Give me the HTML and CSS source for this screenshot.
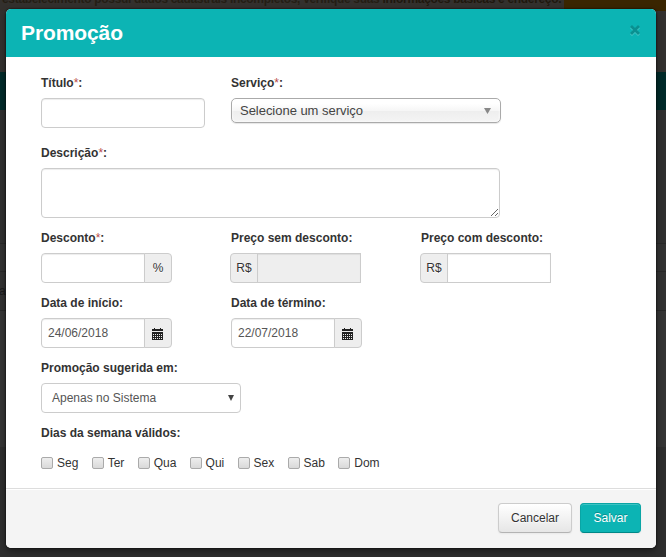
FILE: index.html
```html
<!DOCTYPE html>
<html lang="pt-BR">
<head>
<meta charset="utf-8">
<title>Promoção</title>
<link rel="stylesheet" href="styles.css">
</head>
<body>
<div class="page">
  <div class="notice"><p>estabelecimento possui dados cadastrais incompletos, verifique suas <b>informações básicas e endereço.</b></p><span class="notice-action"></span></div>
  <div class="page-top"></div>
  <div class="navband"></div>
  <div class="page-main"></div>
  <div class="page-row"></div>
  <div class="page-row tall">ar</div>
  <div class="page-rest"></div>
  <div class="page-end"></div>
</div>
<section class="modal">
  <header><h1>Promoção</h1><button class="close" aria-label="Fechar"><svg width="10" height="11" viewBox="0 0 10 11"><path class="close-light" d="M1 2l8 8M9 2l-8 8"/><path class="close-mark" d="M1 1l8 8M9 1l-8 8"/></svg></button></header>
  <form>
    <div class="row first">
      <div class="field"><label>Título<i>*</i>:</label><input class="title-input" type="text"></div>
      <div class="field"><label>Serviço<i>*</i>:</label><div class="service"><span>Selecione um serviço</span><svg width="7" height="6" viewBox="0 0 7 6"><path d="M0 0h7L3.5 6z"/></svg></div></div>
    </div>
    <div class="row"><div class="field"><label>Descrição<i>*</i>:</label><textarea></textarea></div></div>
    <div class="row">
      <div class="field"><label>Desconto<i>*</i>:</label><div class="group"><input type="text"><span class="addon">%</span></div></div>
      <div class="field price"><label>Preço sem desconto:</label><div class="group pre"><span class="addon">R$</span><input type="text" disabled></div></div>
      <div class="field"><label>Preço com desconto:</label><div class="group pre"><span class="addon">R$</span><input type="text"></div></div>
    </div>
    <div class="row">
      <div class="field"><label>Data de início:</label><div class="group"><input type="text" value="24/06/2018"><span class="addon"><svg class="cal" width="11" height="12" viewBox="0 0 11 12"><path d="M2 0h1v1h5V0h1v1h2v2H0V1h2zM0 4h11v8H0z"/><path class="days" d="M1.5 6v5M3.5 6v5M5.5 6v5M7.5 6v5M9.5 6v5"/></svg></span></div></div>
      <div class="field"><label>Data de término:</label><div class="group"><input type="text" value="22/07/2018"><span class="addon"><svg class="cal" width="11" height="12" viewBox="0 0 11 12"><path d="M2 0h1v1h5V0h1v1h2v2H0V1h2zM0 4h11v8H0z"/><path class="days" d="M1.5 6v5M3.5 6v5M5.5 6v5M7.5 6v5M9.5 6v5"/></svg></span></div></div>
    </div>
    <div class="row"><div class="field"><label>Promoção sugerida em:</label><div class="select"><span>Apenas no Sistema</span><svg width="6" height="6" viewBox="0 0 6 6"><path d="M0 0h6L3 6z"/></svg></div></div></div>
    <div class="row"><div class="field"><label>Dias da semana válidos:</label>
      <div class="days-list"><span class="day"><span class="box"></span>Seg</span><span class="day"><span class="box"></span>Ter</span><span class="day"><span class="box"></span>Qua</span><span class="day"><span class="box"></span>Qui</span><span class="day"><span class="box"></span>Sex</span><span class="day"><span class="box"></span>Sab</span><span class="day"><span class="box"></span>Dom</span></div>
    </div></div>
  </form>
  <footer><button class="btn">Cancelar</button><button class="btn primary">Salvar</button></footer>
</section>
</body>
</html>
```
FILE: styles.css
```css
* { box-sizing: border-box; }
body { margin: 0; width: 666px; height: 557px; overflow: hidden; background: #303030; color: #333; font: 12px/20px "Liberation Sans", Arial, sans-serif; }
.page { height: 557px; display: flex; flex-direction: column; color: #1b1b1b; }
.notice { height: 11px; display: flex; justify-content: space-between; background: #33302d; overflow: hidden; color: #231d14; font-weight: bold; letter-spacing: -0.32px; }
.notice p { margin: -11px 0 0 2px; white-space: nowrap; }
.notice b { color: #1e170d; }
.notice-action { flex: none; width: 102px; height: 11px; background: #3a2500; }
.page-top { height: 61px; background: #33312f; }
.navband { height: 38px; background: #002a29; }
.page-main { height: 133px; background: #303030; }
.page-row { height: 28px; background: #323232; border-top: 1px solid #282828; }
.page-row.tall { height: 40px; line-height: 38px; border-bottom: 1px solid #282828; margin-left: -1px; }
.page-rest { height: 136px; background: #353535; }
.page-end { flex: 1; background: #2e2e2e; }
.modal { position: absolute; left: 6px; top: 9px; width: 650px; height: 539px; display: flex; flex-direction: column; border-radius: 5px; overflow: hidden; background: #fff; box-shadow: 0 0 2px #000, 0 3px 7px rgba(0,0,0,.4); }
header { height: 48px; padding: 0 16px 0 15px; display: flex; align-items: center; justify-content: space-between; background: #0cb4b4; }
h1 { margin: 0; font-size: 21px; line-height: 30px; letter-spacing: -0.1px; color: #fff; }
.close { border: 0; background: none; padding: 0; width: 10px; height: 11px; margin-bottom: 5px; line-height: 0; }
.close path { fill: none; stroke-width: 2.8; }
.close .close-mark { stroke: #0a9090; }
.close .close-light { stroke: #4cc8c8; }
form { height: 431px; padding: 16px 35px 0; }
.row { display: flex; margin-bottom: 10px; }
.row.first { margin-bottom: 15px; }
.field { width: 190px; }
.field.price { margin-left: -1px; width: 190px; }
.price label, .price + .field label { padding-left: 1px; }
label { display: block; font-weight: bold; margin-bottom: 5px; }
label i { font-style: normal; font-weight: normal; color: #b94a48; }
input, textarea { display: block; height: 30px; border: 1px solid #ccc; border-radius: 4px; background: #fff; box-shadow: inset 0 1px 1px rgba(0,0,0,.075); font: 12px/20px "Liberation Sans", Arial, sans-serif; color: #555; padding: 4px 6px; margin: 0; outline: 0; }
.title-input { width: 164px; }
textarea { width: 459px; height: 50px; resize: both; }
.service { width: 270px; height: 25px; display: flex; align-items: center; justify-content: space-between; padding: 0 9px 0 8px; border: 1px solid #aaa; border-radius: 5px; background: linear-gradient(#fff 20%, #f6f6f6 50%, #eee 52%, #f4f4f4 100%); box-shadow: inset 0 0 3px #fff, 0 1px 1px rgba(0,0,0,.1); font-size: 13px; letter-spacing: -0.03px; color: #444; }
.service svg { fill: #888; }
.group { display: flex; }
.group input { width: 104px; border-radius: 4px 0 0 4px; }
.addon { width: 28px; height: 30px; margin-left: -1px; display: flex; align-items: center; justify-content: center; border: 1px solid #ccc; border-radius: 0 4px 4px 0; background: #eee; text-shadow: 0 1px 0 #fff; }
.pre .addon { margin: 0 -1px 0 0; border-radius: 4px 0 0 4px; }
.pre input { border-radius: 0; }
input:disabled { background: #eee; }
.cal { fill: #222; margin: 2px 1px 0 0; }
.cal .days { fill: none; stroke: #eee; stroke-width: 1; stroke-dasharray: 1 1; }
.select { width: 200px; height: 30px; display: flex; align-items: center; justify-content: space-between; border: 1px solid #ccc; border-radius: 4px; padding: 0 6px 0 10px; color: #555; }
.select svg { fill: #444; }
.days-list { display: flex; width: 400px; padding-top: 5px; }
.day { display: flex; align-items: center; gap: 4px; margin-right: 13.3px; }
.box { width: 12px; height: 12px; border: 1px solid #aaa; border-radius: 2px; background: linear-gradient(#eee, #d9d9d9); }
footer { flex: 1; padding: 14px 15px 0; display: flex; justify-content: flex-end; gap: 8px; border-top: 1px solid #ddd; background: #f4f4f4; box-shadow: inset 0 1px 0 #fff; }
.btn { height: 30px; width: 74px; padding: 0; border: 1px solid #ccc; border-bottom-color: #b3b3b3; border-radius: 4px; background: linear-gradient(#fff, #e6e6e6); box-shadow: inset 0 1px 0 rgba(255,255,255,.2), 0 1px 2px rgba(0,0,0,.05); font: 12px/20px "Liberation Sans", Arial, sans-serif; color: #333; text-shadow: 0 1px 1px rgba(255,255,255,.75); }
.btn.primary { width: 61px; border-color: #0aa5a5 #0aa5a5 #088; background: #0cb4b4; color: #fff; text-shadow: 0 -1px 0 rgba(0,0,0,.25); }
```
